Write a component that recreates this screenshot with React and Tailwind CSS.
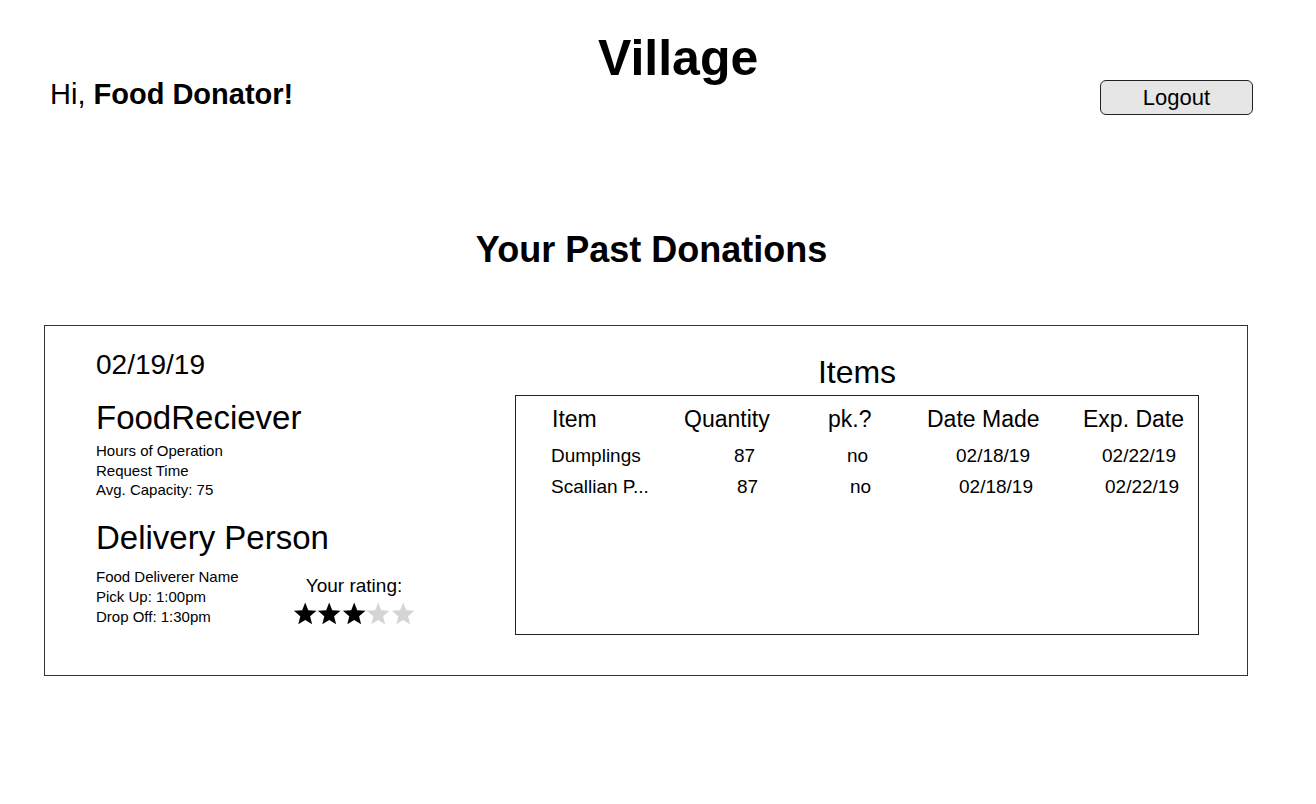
import React from "react";

const font = { fontFamily: '"Liberation Sans", Arial, sans-serif' };

function Star({ filled }) {
    return (
        <svg width="24.4" height="23" viewBox="0 0 24 23">
            <polygon
                points="12,0.6 15,8.2 23.3,8.8 16.9,14.2 18.9,22.3 12,17.9 5.1,22.3 7.1,14.2 0.7,8.8 9,8.2"
                fill={filled ? "#000" : "#d4d4d4"}
            />
        </svg>
    );
}

const header = [
    { label: "Item", w: "w-[132px]" },
    { label: "Quantity", w: "w-[144px]" },
    { label: "pk.?", w: "w-[99px]" },
    { label: "Date Made", w: "w-[156px]" },
    { label: "Exp. Date", w: "" },
];

function Row({ cells, shift }) {
    return (
        <div className="flex pl-[35px] text-[19px] leading-none">
            <div className={shift ? "w-[186px]" : "w-[183px]"}>{cells[0]}</div>
            <div className="w-[113px]">{cells[1]}</div>
            <div className="w-[109px]">{cells[2]}</div>
            <div className="w-[146px]">{cells[3]}</div>
            <div>{cells[4]}</div>
        </div>
    );
}

export default function App() {
    return (
        <main className="w-[1316px] min-h-[804px] bg-white text-black" style={font}>
            <header className="flex items-start pl-[50px]">
                <div className="w-[548px] mt-[80px] text-[29px] leading-none whitespace-nowrap">
                    Hi, <span className="font-bold">Food Donator!</span>
                </div>
                <h1 className="mt-[33px] text-[50px] leading-none font-bold">Village</h1>
                <button className="ml-auto mr-[63px] mt-[80px] w-[153px] h-[35px] rounded-[6px] border border-[#222] bg-[#e6e6e6] text-[22px] leading-none">
                    Logout
                </button>
            </header>

            <h2 className="mt-[117px] pr-[13px] text-center text-[36px] leading-none font-bold">
                Your Past Donations
            </h2>

            <section className="mt-[57px] ml-[44px] w-[1204px] h-[351px] border border-[#333] flex">
                <div className="w-[470px] pl-[51px] pt-[25px] flex flex-col">
                    <p className="text-[28px] leading-none">02/19/19</p>
                    <p className="mt-[22px] text-[33px] leading-none">FoodReciever</p>
                    <div className="mt-[7px] text-[15px] leading-[19.5px]">
                        <p>Hours of Operation</p>
                        <p>Request Time</p>
                        <p>Avg. Capacity: 75</p>
                    </div>
                    <p className="mt-[21px] text-[33px] leading-none">Delivery Person</p>
                    <div className="mt-[13px] flex">
                        <div className="w-[197px] text-[15px] leading-[20px]">
                            <p>Food Deliverer Name</p>
                            <p>Pick Up: 1:00pm</p>
                            <p>Drop Off: 1:30pm</p>
                        </div>
                        <div className="w-[122px] flex flex-col items-center">
                            <p className="mt-[9px] text-[19px] leading-none">Your rating:</p>
                            <div className="mt-[7px] flex">
                                {[1, 2, 3, 4, 5].map((n) => (
                                    <Star key={n} filled={n <= 3} />
                                ))}
                            </div>
                        </div>
                    </div>
                </div>

                <div className="w-[684px] pt-[30px] flex flex-col">
                    <p className="text-center text-[32px] leading-none">Items</p>
                    <div className="mt-[7px] h-[240px] border border-[#222] pt-[12px]">
                        <div className="flex pl-[36px] text-[23px] leading-none">
                            {header.map((h) => (
                                <div key={h.label} className={h.w}>{h.label}</div>
                            ))}
                        </div>
                        <div className="mt-[15px]">
                            <Row cells={["Dumplings", "87", "no", "02/18/19", "02/22/19"]} />
                        </div>
                        <div className="mt-[12px]">
                            <Row shift cells={["Scallian P...", "87", "no", "02/18/19", "02/22/19"]} />
                        </div>
                    </div>
                </div>
            </section>
        </main>
    );
}
